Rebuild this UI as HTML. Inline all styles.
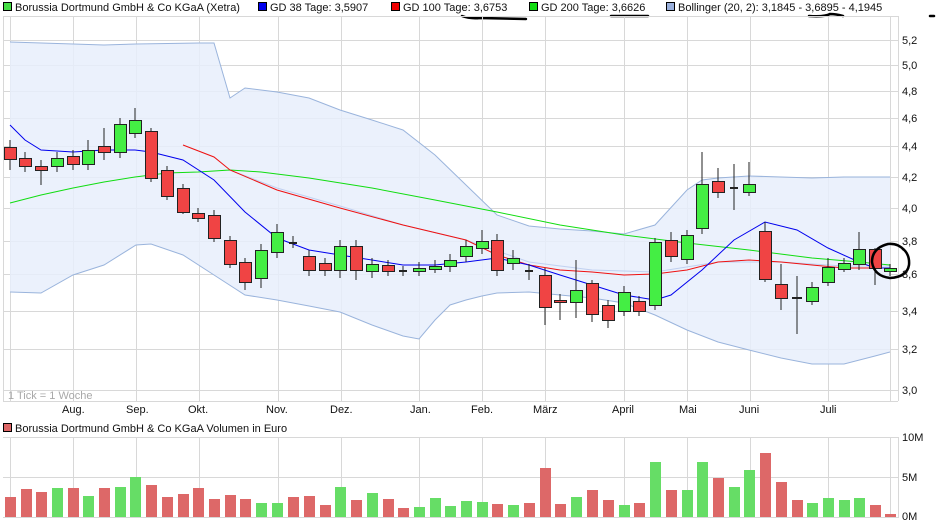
<!DOCTYPE html>
<html><head><meta charset="utf-8"><style>
html,body{margin:0;padding:0;background:#fff;width:940px;height:526px;overflow:hidden}
svg{display:block;font-family:"Liberation Sans",sans-serif}
</style></head><body>
<svg width="940" height="526" viewBox="0 0 940 526" xmlns="http://www.w3.org/2000/svg">
<g font-size="11" fill="#111">
<rect x="3.5" y="2.5" width="8" height="8" fill="#44dd44" stroke="#000"/><text x="15" y="11">Borussia Dortmund GmbH &amp; Co KGaA (Xetra)</text>
<rect x="258.5" y="2.5" width="8" height="8" fill="#0000ee" stroke="#000"/><text x="270" y="11">GD 38 Tage: 3,5907</text>
<rect x="391.5" y="2.5" width="8" height="8" fill="#ee0000" stroke="#000"/><text x="403" y="11">GD 100 Tage: 3,6753</text>
<rect x="529.5" y="2.5" width="8" height="8" fill="#11dd11" stroke="#000"/><text x="541" y="11">GD 200 Tage: 3,6626</text>
<rect x="666.5" y="2.5" width="8" height="8" fill="#9ab0dc" stroke="#000"/><text x="678" y="11">Bollinger (20, 2): 3,1845 - 3,6895 - 4,1945</text>
</g>
<g stroke="#000" stroke-width="2.5" fill="none" stroke-linecap="round">
<path d="M462 16 Q470 19 480 18 L526 19"/><path d="M611 16 L648 16"/><path d="M809 16 Q825 17 830 14 Q836 14 843 16"/><path d="M930 16 L934 16"/>
</g>
<g stroke="#d8d8d8" stroke-width="1">
<path d="M3 40.5H898M3 65.5H898M3 91.5H898M3 118.5H898M3 146.5H898M3 177.5H898M3 208.5H898M3 241.5H898M3 274.5H898M3 311.5H898M3 349.5H898M3 390.5H898"/>
<path d="M10.5 16V401M73.5 16V401M136.5 16V401M199.5 16V401M278.5 16V401M341.5 16V401M419.5 16V401M482.5 16V401M545.5 16V401M624.5 16V401M687.5 16V401M750.5 16V401M828.5 16V401M890.5 16V401"/>
<path d="M3 16.5H898M898.5 16V401M3 401.5H898M3.5 16V401"/>
</g>
<path fill="#e8effc" fill-opacity="0.85" stroke="none" d="M10 42L73 44L104 45L136 44L199 43L214 43L230 98L245 88L277 92L309 98L340 110L372 120L403 130L435 155L466 185L497 215L529 226L560 229L592 231L624 234L655 225L687 190L702 180L718 178L749 176L781 177L812 178L844 177L890 177L890 352L875 356L844 364L812 364L781 358L749 350L718 342L687 330L655 315L624 303L592 298L560 295L529 292L497 293L482 296L466 300L450 305L435 320L419 339L403 336L372 325L340 312L309 306L277 300L245 295L214 275L183 255L151 244L136 245L104 265L73 275L41 293L10 292Z"/>
<g fill="none" stroke="#9ab4dc" stroke-width="1">
<path d="M10 42L73 44L104 45L136 44L199 43L214 43L230 98L245 88L277 92L309 98L340 110L372 120L403 130L435 155L466 185L497 215L529 226L560 229L592 231L624 234L655 225L687 190L702 180L718 178L749 176L781 177L812 178L844 177L890 177"/>
<path d="M10 292L41 293L73 275L104 265L136 245L151 244L183 255L214 275L245 295L277 300L309 306L340 312L372 325L403 336L419 339L435 320L450 305L466 300L482 296L497 293L529 292L560 295L592 298L624 303L655 315L687 330L718 342L749 350L781 358L812 364L844 364L875 356L890 352"/>
<path stroke="#c0d0f0" d="M230 170L277 188L340 206L403 225L466 240L529 262L592 270L655 272L718 262L781 262L844 266L890 266"/>
</g>
<path fill="none" stroke="#11dd11" stroke-width="1" d="M10 203L41 195L73 188L104 182L135 177L167 173L198 172L230 170L261 172L309 178L372 188L435 200L497 212L560 225L624 235L687 243L749 250L812 258L859 262L890 265"/>
<path fill="none" stroke="#ee1111" stroke-width="1" d="M183 145L214 157L230 170L277 190L340 208L403 225L466 240L497 255L529 265L560 270L592 272L624 275L655 274L687 270L718 262L749 260L781 262L812 265L844 268L890 268"/>
<path fill="none" stroke="#0000ee" stroke-width="1" d="M10 125L25 140L41 150L73 152L104 150L135 150L151 152L183 160L214 180L245 212L277 238L309 250L340 255L372 260L403 265L435 265L466 262L497 258L529 265L560 275L592 285L624 295L655 300L671 295L702 270L734 240L765 222L797 230L828 248L859 262L875 268L890 268"/>
<g stroke="#222" stroke-width="1">
<path d="M10 140V170M25 152V172M41 160V185M57 152V172M73 150V170M88 140V170M104 128V160M120 118V158M135 108V138M151 128V182M167 166V200M183 184V214M198 208V222M214 210V242M230 236V268M245 258V290M261 244V288M277 224V258M293 236V248M309 250V276M325 258V276M340 240V278M356 240V280M372 258V278M388 260V276M403 266V276M419 262V276M435 260V273M450 254V272M466 240V262M482 230V254M497 234V276M513 250V270M529 264V280M545 268V325M560 294V320M576 260V318M592 280V322M608 300V328M624 286V316M639 296V316M655 238V310M671 232V262M687 230V264M702 152V234M718 168V198M734 164V210M749 162V196M765 222V282M781 264V310M797 276V334M812 282V305M828 258V286M844 258V272M859 232V270M875 248V285M890 264V276"/>
<path stroke-width="2" d="M289 243H297M525 271H533M399 271H407M730 188H738M792 298H802"/>
</g>
<g stroke="#222" stroke-width="1">
<g fill="#f04444">
<rect x="4.5" y="147.5" width="12" height="12"/><rect x="19.5" y="158.5" width="12" height="8"/><rect x="35.5" y="166.5" width="12" height="4"/><rect x="67.5" y="156.5" width="12" height="8"/><rect x="98.5" y="146.5" width="12" height="6"/><rect x="145.5" y="131.5" width="12" height="47"/><rect x="161.5" y="170.5" width="12" height="26"/><rect x="177.5" y="188.5" width="12" height="24"/><rect x="192.5" y="213.5" width="12" height="5"/><rect x="208.5" y="215.5" width="12" height="23"/><rect x="224.5" y="240.5" width="12" height="24"/><rect x="239.5" y="262.5" width="12" height="20"/><rect x="303.5" y="256.5" width="12" height="14"/><rect x="319.5" y="263.5" width="12" height="7"/><rect x="350.5" y="246.5" width="12" height="24"/><rect x="382.5" y="265.5" width="12" height="6"/><rect x="491.5" y="240.5" width="12" height="30"/><rect x="539.5" y="275.5" width="12" height="32"/><rect x="554.5" y="300.5" width="12" height="2"/><rect x="586.5" y="283.5" width="12" height="31"/><rect x="602.5" y="305.5" width="12" height="15"/><rect x="633.5" y="301.5" width="12" height="10"/><rect x="665.5" y="240.5" width="12" height="16"/><rect x="712.5" y="181.5" width="12" height="11"/><rect x="759.5" y="231.5" width="12" height="48"/><rect x="775.5" y="284.5" width="12" height="14"/><rect x="869.5" y="249.5" width="12" height="19"/>
</g>
<g fill="#44ee44">
<rect x="51.5" y="158.5" width="12" height="8"/><rect x="82.5" y="150.5" width="12" height="14"/><rect x="114.5" y="124.5" width="12" height="28"/><rect x="129.5" y="120.5" width="12" height="13"/><rect x="255.5" y="250.5" width="12" height="28"/><rect x="271.5" y="232.5" width="12" height="20"/><rect x="334.5" y="246.5" width="12" height="24"/><rect x="366.5" y="264.5" width="12" height="7"/><rect x="413.5" y="268.5" width="12" height="3"/><rect x="429.5" y="266.5" width="12" height="3"/><rect x="444.5" y="260.5" width="12" height="6"/><rect x="460.5" y="246.5" width="12" height="10"/><rect x="476.5" y="241.5" width="12" height="7"/><rect x="507.5" y="258.5" width="12" height="5"/><rect x="570.5" y="290.5" width="12" height="12"/><rect x="618.5" y="292.5" width="12" height="19"/><rect x="649.5" y="242.5" width="12" height="63"/><rect x="681.5" y="235.5" width="12" height="24"/><rect x="696.5" y="184.5" width="12" height="44"/><rect x="743.5" y="184.5" width="12" height="8"/><rect x="806.5" y="287.5" width="12" height="14"/><rect x="822.5" y="267.5" width="12" height="15"/><rect x="838.5" y="263.5" width="12" height="6"/><rect x="853.5" y="249.5" width="12" height="15"/><rect x="884.5" y="268.5" width="12" height="3"/>
</g>
</g>
<path d="M904 250 Q898 243 888 244 Q872 248 872 262 Q874 276 890 278 Q907 277 909 265 Q910 254 902 248" fill="none" stroke="#000" stroke-width="2.5"/>
<g font-size="11" fill="#111">
<text x="902" y="44">5,2</text><text x="902" y="69">5,0</text><text x="902" y="95">4,8</text><text x="902" y="122">4,6</text><text x="902" y="150">4,4</text><text x="902" y="181">4,2</text><text x="902" y="212">4,0</text><text x="902" y="245">3,8</text><text x="902" y="278">3,6</text><text x="902" y="315">3,4</text><text x="902" y="353">3,2</text><text x="902" y="394">3,0</text>
<text x="62" y="413">Aug.</text><text x="126" y="413">Sep.</text><text x="188" y="413">Okt.</text><text x="266" y="413">Nov.</text><text x="330" y="413">Dez.</text><text x="410" y="413">Jan.</text><text x="471" y="413">Feb.</text><text x="533" y="413">März</text><text x="612" y="413">April</text><text x="679" y="413">Mai</text><text x="739" y="413">Juni</text><text x="820" y="413">Juli</text>
<text x="8" y="399" fill="#a8a8a8">1 Tick = 1 Woche</text>
<rect x="3.5" y="423.5" width="8" height="8" fill="#dd6666" stroke="#000"/><text x="15" y="432">Borussia Dortmund GmbH &amp; Co KGaA Volumen in Euro</text>
<text x="902" y="441">10M</text><text x="902" y="481">5M</text><text x="902" y="520">0M</text>
</g>
<g stroke="#d8d8d8">
<path d="M3 437.5H898M3 477.5H898M3 517.5H898M898.5 437V518"/>
<path d="M10.5 437V517M73.5 437V517M136.5 437V517M199.5 437V517M278.5 437V517M341.5 437V517M419.5 437V517M482.5 437V517M545.5 437V517M624.5 437V517M687.5 437V517M750.5 437V517M828.5 437V517M890.5 437V517"/>
</g>
<g fill="#dd6868">
<rect x="5" y="497" width="11" height="20"/><rect x="21" y="489" width="11" height="28"/><rect x="36" y="492" width="11" height="25"/><rect x="68" y="488" width="11" height="29"/><rect x="99" y="488" width="11" height="29"/><rect x="146" y="485" width="11" height="32"/><rect x="162" y="497" width="11" height="20"/><rect x="178" y="494" width="11" height="23"/><rect x="193" y="488" width="11" height="29"/><rect x="209" y="499" width="11" height="18"/><rect x="225" y="495" width="11" height="22"/><rect x="240" y="499" width="11" height="18"/><rect x="288" y="497" width="11" height="20"/><rect x="304" y="496" width="11" height="21"/><rect x="320" y="505" width="11" height="12"/><rect x="351" y="500" width="11" height="17"/><rect x="383" y="499" width="11" height="18"/><rect x="398" y="508" width="11" height="9"/><rect x="492" y="504" width="11" height="13"/><rect x="524" y="503" width="11" height="14"/><rect x="540" y="468" width="11" height="49"/><rect x="555" y="504" width="11" height="13"/><rect x="587" y="490" width="11" height="27"/><rect x="603" y="500" width="11" height="17"/><rect x="634" y="503" width="11" height="14"/><rect x="666" y="490" width="11" height="27"/><rect x="713" y="478" width="11" height="39"/><rect x="760" y="453" width="11" height="64"/><rect x="776" y="482" width="11" height="35"/><rect x="792" y="500" width="11" height="17"/><rect x="870" y="505" width="11" height="12"/><rect x="885" y="514" width="11" height="3"/>
</g>
<g fill="#66dd66">
<rect x="52" y="488" width="11" height="29"/><rect x="83" y="496" width="11" height="21"/><rect x="115" y="487" width="11" height="30"/><rect x="130" y="477" width="11" height="40"/><rect x="256" y="503" width="11" height="14"/><rect x="272" y="503" width="11" height="14"/><rect x="335" y="487" width="11" height="30"/><rect x="367" y="493" width="11" height="24"/><rect x="414" y="507" width="11" height="10"/><rect x="430" y="498" width="11" height="19"/><rect x="445" y="506" width="11" height="11"/><rect x="461" y="501" width="11" height="16"/><rect x="477" y="502" width="11" height="15"/><rect x="508" y="505" width="11" height="12"/><rect x="571" y="497" width="11" height="20"/><rect x="619" y="505" width="11" height="12"/><rect x="650" y="462" width="11" height="55"/><rect x="682" y="490" width="11" height="27"/><rect x="697" y="462" width="11" height="55"/><rect x="729" y="487" width="11" height="30"/><rect x="744" y="470" width="11" height="47"/><rect x="807" y="503" width="11" height="14"/><rect x="823" y="498" width="11" height="19"/><rect x="839" y="500" width="11" height="17"/><rect x="854" y="498" width="11" height="19"/>
</g>
</svg>
</body></html>
